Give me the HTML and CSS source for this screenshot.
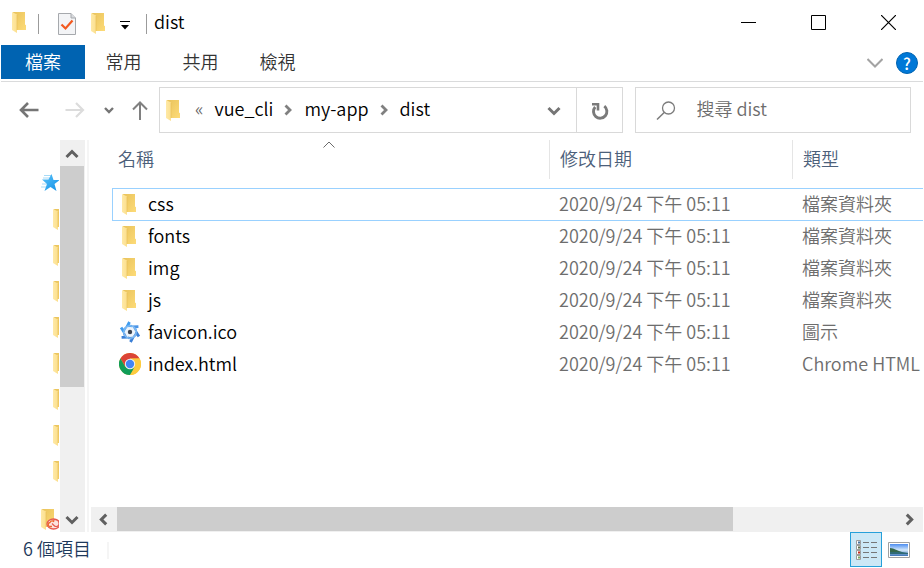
FILE: index.html
```
<!DOCTYPE html>
<html lang="zh-Hant">
<head>
  <meta charset="UTF-8">
  <meta name="viewport" content="width=device-width, initial-scale=1.0">
  <title>dist</title>
  <link rel="stylesheet" href="styles.css">
</head>
<body>

  <!-- shared icons -->
  <svg class="defs" width="0" height="0" aria-hidden="true">
    <defs>
      <linearGradient id="flap" x1="0" x2="1" y1="0" y2="0">
        <stop offset="0" stop-color="#ffe9a6"/>
        <stop offset="1" stop-color="#fbdf8e"/>
      </linearGradient>
      <linearGradient id="back" x1="0" x2="1" y1="0" y2="1">
        <stop offset="0" stop-color="#e9c35c"/>
        <stop offset="1" stop-color="#fddb78"/>
      </linearGradient>
      <linearGradient id="sky" x1="0" x2="0" y1="0" y2="1">
        <stop offset="0" stop-color="#4d8df0"/>
        <stop offset="0.5" stop-color="#d3e8fb"/>
        <stop offset="1" stop-color="#3a72b5"/>
      </linearGradient>
      <linearGradient id="starfill" x1="0" x2="1" y1="0" y2="1">
        <stop offset="0" stop-color="#5cc4fa"/>
        <stop offset="1" stop-color="#118fe6"/>
      </linearGradient>
    </defs>
    <symbol id="folder" viewBox="0 0 14 21">
      <path d="M1 0h12v12.500l1 .7V18H4z" fill="url(#back)"/>
      <path d="M0 0l5 2.500V21L0 18z" fill="url(#flap)"/>
      <path d="M5 3v15" stroke="#e6bd55" stroke-width=".6"/>
    </symbol>
    <symbol id="chevron" viewBox="0 0 8 12">
      <path d="M1.500 1.500L6 6l-4.500 4.500" fill="none" stroke="currentColor" stroke-width="2.800"/>
    </symbol>
    <symbol id="chevron-down" viewBox="0 0 14 10">
      <path d="M1.500 2L7 7.500 12.500 2" fill="none" stroke="currentColor" stroke-width="3"/>
    </symbol>
  </svg>

  <div class="window">
    <header class="titlebar">
      <svg class="folder" aria-hidden="true"><use href="#folder"/></svg>
      <span class="divider"></span>
      <div class="quick">
        <button aria-label="內容">
          <svg width="18" height="22" viewBox="0 0 18 22">
            <path d="M.5.5H13L17.500 5v16.500H.5z" fill="#f3f4f6" stroke="#a6a9ad"/>
            <path d="M13 .5V5h4.500" fill="#d9dbde" stroke="#a6a9ad"/>
            <path d="M3.500 11.500l4 4 7-8" fill="none" stroke="#f2591f" stroke-width="2.200"/>
          </svg>
        </button>
        <button aria-label="新增資料夾"><svg class="folder"><use href="#folder"/></svg></button>
        <button class="customize" aria-label="自訂快速存取工具列">
          <svg width="10" height="9" viewBox="0 0 10 9">
            <path d="M0 .5h10" stroke="#000"/>
            <path d="M1 4h8L5 8.500z" fill="#000"/>
          </svg>
        </button>
      </div>
      <span class="divider"></span>
      <h1>dist</h1>
      <div class="controls">
        <button aria-label="最小化"><svg width="15" height="15"><path d="M0 7.500h15" stroke="#000"/></svg></button>
        <button aria-label="最大化"><svg width="15" height="15"><path d="M.5.5h14v14H.5z" fill="none" stroke="#000"/></svg></button>
        <button aria-label="關閉"><svg width="15" height="15"><path d="M0 0l15 15M15 0L0 15" stroke="#000" stroke-width="1.200"/></svg></button>
      </div>
    </header>

    <nav class="ribbon">
      <button class="file">檔案</button>
      <button>常用</button>
      <button>共用</button>
      <button>檢視</button>
      <div class="ribbon-end">
        <button aria-label="展開功能區"><svg width="16" height="10"><path d="M.5 1L8 8.500 15.500 1" fill="none" stroke="#a3a3a3" stroke-width="2"/></svg></button>
        <button class="help" aria-label="說明">?</button>
      </div>
    </nav>

    <div class="navbar">
      <div class="history">
        <button class="back" aria-label="上一頁"><svg width="20" height="16"><path d="M19.500 8H2M9 1L2 8l7 7" fill="none" stroke="#757575" stroke-width="2.600"/></svg></button>
        <button class="forward" aria-label="下一頁"><svg width="20" height="16"><path d="M.5 8H18M11 1l7 7-7 7" fill="none" stroke="#dcdcdc" stroke-width="2.200"/></svg></button>
        <button class="recent" aria-label="最近的位置"><svg width="10" height="7"><path d="M1 1l4 4 4-4" fill="none" stroke="#757575" stroke-width="2.400"/></svg></button>
        <button class="up" aria-label="上移"><svg width="16" height="19"><path d="M8 19V1.500M1 8.500l7-7 7 7" fill="none" stroke="#808080" stroke-width="2"/></svg></button>
      </div>
      <div class="address">
        <svg class="folder" aria-hidden="true"><use href="#folder"/></svg>
        <span class="more">«</span>
        <a href="#">vue_cli</a>
        <svg class="sep" aria-hidden="true"><use href="#chevron"/></svg>
        <a href="#">my-app</a>
        <svg class="sep" aria-hidden="true"><use href="#chevron"/></svg>
        <a href="#">dist</a>
        <button class="drop" aria-label="先前的位置"><svg class="down"><use href="#chevron-down"/></svg></button>
        <button class="refresh" aria-label="重新整理">
          <svg width="18" height="18" viewBox="0 0 18 18">
            <path d="M13.300 4.200A6.700 6.700 0 1 1 4.200 5" fill="none" stroke="#7a7a7a" stroke-width="2.900"/>
            <path d="M1 2.300h6v6.200" fill="none" stroke="#7a7a7a" stroke-width="2.600"/>
          </svg>
        </button>
      </div>
      <label class="search">
        <svg width="20" height="19" viewBox="0 0 20 19" aria-hidden="true">
          <circle cx="12.500" cy="7" r="6" fill="none" stroke="#7c7c7c" stroke-width="1.300"/>
          <path d="M8.200 11.500L1 18.500" stroke="#7c7c7c" stroke-width="1.500"/>
        </svg>
        <input type="search" placeholder="搜尋 dist" aria-label="搜尋 dist">
      </label>
    </div>

    <main class="content">
      <ul class="tree">
        <li>
          <svg width="20" height="20" viewBox="0 0 20 20">
            <path d="M3 2.500h8M2 5h7M0 14h5M1 11h6" stroke="#a7dbf7"/>
            <path d="M10.500 1l2 6h6l-5 4 2 7-6-4-6 4 2.500-7-5-4.500h6.500z" fill="url(#starfill)"/>
          </svg>
        </li>
        <li class="sub"><svg class="folder"><use href="#folder"/></svg></li>
        <li class="sub"><svg class="folder"><use href="#folder"/></svg></li>
        <li class="sub"><svg class="folder"><use href="#folder"/></svg></li>
        <li class="sub"><svg class="folder"><use href="#folder"/></svg></li>
        <li class="sub"><svg class="folder"><use href="#folder"/></svg></li>
        <li class="sub"><svg class="folder"><use href="#folder"/></svg></li>
        <li class="sub"><svg class="folder"><use href="#folder"/></svg></li>
        <li class="sub"><svg class="folder"><use href="#folder"/></svg></li>
        <li class="cloud">
          <svg width="20" height="21" viewBox="0 0 20 21">
            <use href="#folder" width="14" height="21"/>
            <ellipse cx="12.500" cy="15" rx="6.500" ry="5" fill="#fbe3df" stroke="#e65a50" stroke-width="1.300"/>
            <path d="M12 11.500c3-2 6 0 6 3s-3 4-5 2l-2-2" fill="none" stroke="#e65a50" stroke-width="1.100"/>
            <path d="M11 17.500H9.500a2 2 0 0 1-.5-4c1-2 3-2 4-.5" fill="none" stroke="#ee6a2c" stroke-width="1.300"/>
          </svg>
        </li>
      </ul>
      <div class="scroll vertical">
        <button aria-label="向上捲動"><svg class="down flip"><use href="#chevron-down"/></svg></button>
        <div class="track"><div class="thumb"></div></div>
        <button aria-label="向下捲動"><svg class="down"><use href="#chevron-down"/></svg></button>
      </div>

      <section class="files">
        <div class="list">
          <table>
            <colgroup>
              <col class="col-name">
              <col class="col-date">
              <col class="col-type">
            </colgroup>
            <thead>
              <tr>
                <th aria-sort="ascending"><div class="head">名稱
                  <svg class="sort" width="12" height="7"><path d="M.5 6.500L6 1l5.500 5.500" fill="none" stroke="#6b6b6b"/></svg>
                </div></th>
                <th><div class="head">修改日期</div></th>
                <th><div class="head">類型</div></th>
              </tr>
            </thead>
            <tbody>
              <tr class="selected">
                <td><div class="name"><svg class="folder"><use href="#folder"/></svg>css</div></td>
                <td>2020/9/24 下午 05:11</td>
                <td>檔案資料夾</td>
              </tr>
              <tr>
                <td><div class="name"><svg class="folder"><use href="#folder"/></svg>fonts</div></td>
                <td>2020/9/24 下午 05:11</td>
                <td>檔案資料夾</td>
              </tr>
              <tr>
                <td><div class="name"><svg class="folder"><use href="#folder"/></svg>img</div></td>
                <td>2020/9/24 下午 05:11</td>
                <td>檔案資料夾</td>
              </tr>
              <tr>
                <td><div class="name"><svg class="folder"><use href="#folder"/></svg>js</div></td>
                <td>2020/9/24 下午 05:11</td>
                <td>檔案資料夾</td>
              </tr>
              <tr>
                <td><div class="name">
                  <svg class="app" viewBox="0 0 22 22">
                    <g fill="none" stroke-width="2.800">
                      <path d="M13 5.500L8.500 4.800 10.500 1" stroke="#3f9cf0"/>
                      <path d="M13 5.500L8.500 4.800 10.500 1" stroke="#4a94e6" transform="rotate(60 11 11)"/>
                      <path d="M13 5.500L8.500 4.800 10.500 1" stroke="#3b7fd6" transform="rotate(120 11 11)"/>
                      <path d="M13 5.500L8.500 4.800 10.500 1" stroke="#3b7fd6" transform="rotate(180 11 11)"/>
                      <path d="M13 5.500L8.500 4.800 10.500 1" stroke="#3b7fd6" transform="rotate(240 11 11)"/>
                      <path d="M13 5.500L8.500 4.800 10.500 1" stroke="#3f9cf0" transform="rotate(300 11 11)"/>
                    </g>
                    <circle cx="11" cy="11" r="6.200" fill="none" stroke="#7db9f2" stroke-width="1.500"/>
                    <circle cx="11" cy="11" r="5" fill="#eef4fb"/>
                    <circle cx="11" cy="11" r="2.200" fill="#3b4350"/>
                  </svg>favicon.ico</div></td>
                <td>2020/9/24 下午 05:11</td>
                <td>圖示</td>
              </tr>
              <tr>
                <td><div class="name">
                  <svg class="app" viewBox="0 0 22 22">
                    <circle cx="11" cy="11" r="11" fill="#fccb3f"/>
                    <path d="M1.470 5.500A11 11 0 0 1 20.530 5.500L11 5.800 6.240 13.750z" fill="#db4437"/>
                    <path d="M1.470 5.500L6.240 13.750 11 16.200h4.500L11 22A11 11 0 0 1 1.470 5.500z" fill="#109d58"/>
                    <path d="M11 22l4.760-8.250L11 16.200z" fill="#109d58"/>
                    <path d="M15.760 13.750L11 22a11 11 0 0 0 9.530-16.500H11z" fill="#fccb3f"/>
                    <circle cx="11" cy="11" r="5.200" fill="#f1f1f1"/>
                    <circle cx="11" cy="11" r="4.200" fill="#4285f4"/>
                  </svg>index.html</div></td>
                <td>2020/9/24 下午 05:11</td>
                <td>Chrome HTML</td>
              </tr>
            </tbody>
          </table>
        </div>
        <div class="scroll horizontal">
          <button aria-label="向左捲動"><svg class="side flip"><use href="#chevron"/></svg></button>
          <div class="track"><div class="thumb"></div></div>
          <button aria-label="向右捲動"><svg class="side"><use href="#chevron"/></svg></button>
        </div>
      </section>
    </main>

    <footer class="status">
      <span class="count">6 個項目</span>
      <span class="mark"></span>
      <div class="views">
        <button class="active" aria-label="詳細資料">
          <svg width="22" height="22" viewBox="0 0 22 22">
            <path d="M1.500 1.500h4v4h-4zM1.500 6.500h4v4h-4zM1.500 11.500h4v4h-4zM1.500 16.500h4v4h-4z" fill="#fff" stroke="#9b9b9b"/>
            <path d="M3 3.500h2" stroke="#41719c" stroke-width="2"/>
            <path d="M3 8.500h2" stroke="#5a6f4a" stroke-width="2"/>
            <path d="M3 13.500h2" stroke="#c5281c" stroke-width="2"/>
            <path d="M3 18.500h2" stroke="#79a860" stroke-width="2"/>
            <path d="M8 3.500h6M16 3.500h6M8 8.500h6M16 8.500h6M8 13.500h6M16 13.500h6M8 18.500h6M16 18.500h6" stroke="#777"/>
          </svg>
        </button>
        <button aria-label="大圖示">
          <svg width="22" height="16" viewBox="0 0 22 16">
            <path d="M.5.5h21v15H.5z" fill="#fff" stroke="#a0a0a0"/>
            <path d="M2 2h18v12H2z" fill="url(#sky)"/>
            <path d="M2 6c4 0 8 3 12 4H2z" fill="#35664a"/>
            <path d="M2 10h12l6 1v1H2z" fill="#2f6a75"/>
          </svg>
        </button>
      </div>
    </footer>
  </div>

</body>
</html>
```

FILE: styles.css
```
* {
  box-sizing: border-box;
}
body {
  margin: 0;
  background-color: #fff;
  color: #000;
  font-family: "Noto Sans CJK TC", sans-serif;
  font-size: 18px;
  font-weight: 350;
  line-height: 24px;
}
button {
  display: flex;
  align-items: center;
  justify-content: center;
  padding: 0;
  border: 0;
  background: none;
  color: inherit;
  font: inherit;
}
svg {
  display: block;
  flex: none;
}
.defs {
  position: absolute;
}
.folder {
  width: 14px;
  height: 21px;
}
.window {
  display: flex;
  flex-direction: column;
  height: 100vh;
  padding: 0 1px;
}

/* title bar */
.titlebar {
  display: flex;
  align-items: center;
  height: 45px;
  padding-left: 11px;
}
.titlebar .divider {
  width: 1px;
  height: 20px;
  margin: 2px 0 0 12px;
  background-color: #9b9b9b;
}
.quick {
  display: flex;
  align-items: center;
  gap: 15px;
  margin: 2px 16px 0 19px;
}
.quick + .divider {
  margin-left: 0;
}
.customize {
  padding-top: 4px;
}
h1 {
  margin: 0 0 0 7px;
  padding-bottom: 4px;
  font-size: 18px;
  font-weight: 350;
}
.controls {
  display: flex;
  height: 100%;
  margin-left: auto;
}
.controls button {
  width: 70px;
}

/* ribbon tabs */
.ribbon {
  display: flex;
  height: 37px;
  padding-bottom: 2px;
  border-bottom: 1px solid #dadbdc;
  color: #333;
}
.ribbon > button {
  width: 77px;
  padding-bottom: 2px;
}
.ribbon .file {
  width: 84px;
  background-color: #0063b1;
  color: #fff;
}
.ribbon-end {
  display: flex;
  align-items: center;
  gap: 13px;
  margin-left: auto;
  padding: 2px 5px 0 0;
}
.help {
  width: 22px;
  height: 22px;
  border: 1px solid #0063b1;
  border-radius: 50%;
  background-color: #0078d7;
  color: #fff;
  font-size: 16px;
  font-weight: 500;
}

/* address and search */
.navbar {
  display: flex;
  gap: 12px;
  padding: 5px 12px 7px 0;
}
.history {
  display: flex;
  align-items: center;
  width: 146px;
  padding-left: 18px;
}
.forward {
  margin-left: 26px;
}
.recent {
  margin-left: 19px;
}
.up {
  margin-left: 18px;
}
.address {
  display: flex;
  flex: 9;
  align-items: center;
  height: 46px;
  padding-left: 6px;
  border: 1px solid #d9d9d9;
}
.address a {
  padding-bottom: 4px;
  color: #000;
  text-decoration: none;
}
.more {
  margin: 0 11px 0 15px;
  padding-bottom: 4px;
  color: #666;
}
.sep {
  width: 8px;
  height: 12px;
  margin: 0 12px 0 11px;
  color: #808080;
}
.down {
  width: 14px;
  height: 10px;
}
.drop {
  width: 44px;
  height: 100%;
  margin-left: auto;
  padding-top: 2px;
  color: #757575;
}
.refresh {
  width: 46px;
  height: 100%;
  padding-top: 2px;
  border-left: 1px solid #d9d9d9;
}
.search {
  display: flex;
  flex: 5;
  align-items: center;
  gap: 20px;
  padding-left: 20px;
  border: 1px solid #d9d9d9;
}
.search input {
  flex: 1;
  min-width: 0;
  padding: 0 0 4px;
  border: 0;
  outline: 0;
  background: none;
  font: inherit;
}
.search input::placeholder {
  color: #6d6d6d;
  opacity: 1;
}

/* folder tree */
.content {
  display: flex;
  flex: 1;
  min-height: 0;
}
.tree {
  width: 59px;
  margin: 0;
  padding: 26px 1px 0 0;
  overflow: hidden;
  list-style: none;
}
.tree li {
  display: flex;
  align-items: center;
  height: 36px;
  padding: 0 0 2px 40px;
  overflow: hidden;
}
.tree .sub {
  padding-left: 52px;
}
.tree .cloud {
  margin-top: 12px;
}

/* scroll bars */
.scroll {
  display: flex;
  background-color: #f0f0f0;
  color: #606060;
}
.scroll button {
  flex: none;
  width: 26px;
  height: 26px;
}
.track {
  flex: 1;
}
.thumb {
  background-color: #cdcdcd;
}
.vertical {
  flex-direction: column;
  width: 25px;
}
.vertical button {
  width: 24px;
  padding-top: 2px;
}
.vertical .thumb {
  width: 24px;
  height: 65%;
}
.horizontal {
  height: 25px;
}
.horizontal button {
  height: 25px;
  padding-right: 2px;
}
.horizontal .thumb {
  width: 79%;
  height: 24px;
}
.side {
  width: 9px;
  height: 13px;
}
.flip {
  transform: rotate(180deg);
}

/* file list */
.files {
  display: flex;
  flex: 1;
  flex-direction: column;
  min-width: 0;
  margin-left: 2px;
  padding-left: 2px;
  border-left: 2px solid #f5f5f5;
}
.list {
  flex: 1;
  min-height: 0;
  padding-left: 21px;
  overflow: hidden;
}
table {
  width: 100%;
  border-spacing: 0;
  table-layout: fixed;
}
.col-date {
  width: 243px;
}
.col-type {
  width: 131px;
}
th {
  height: 48px;
  padding: 0;
  font-weight: 350;
  text-align: left;
  vertical-align: top;
}
.head {
  position: relative;
  height: 39px;
  padding: 6px 0 0 10px;
  border-left: 1px solid #e5e5e5;
  color: #4c607a;
}
th:first-child .head {
  padding-left: 6px;
  border-left: 0;
}
.sort {
  position: absolute;
  top: 1px;
  left: calc(50% - 8px);
}
td {
  height: 32px;
  padding: 0 0 4px 10px;
  color: #6d6d6d;
  white-space: nowrap;
}
td:first-child {
  padding-left: 7px;
  color: #000;
}
.selected td {
  height: 33px;
  border: solid #99d1ff;
  border-width: 1px 0;
}
.selected td:first-child {
  padding-left: 6px;
  border-left-width: 1px;
}
.name {
  display: flex;
  align-items: center;
  gap: 7px;
  height: 24px;
}
.name .folder {
  margin: 3px 5px 0 3px;
}
.app {
  width: 22px;
  height: 22px;
  margin-top: 2px;
}

/* status bar */
.status {
  display: flex;
  align-items: center;
  height: 36px;
  padding-left: 22px;
  color: #1e395b;
}
.count {
  padding-bottom: 5px;
}
.mark {
  width: 2px;
  height: 17px;
  margin-left: 16px;
  background-color: #f5f5f5;
}
.views {
  display: flex;
  gap: 1px;
  height: 35px;
  margin: 0 8px auto auto;
}
.views button {
  width: 32px;
}
.views .active {
  border: 1px solid #26a0da;
  background-color: #cce8f6;
}
```
